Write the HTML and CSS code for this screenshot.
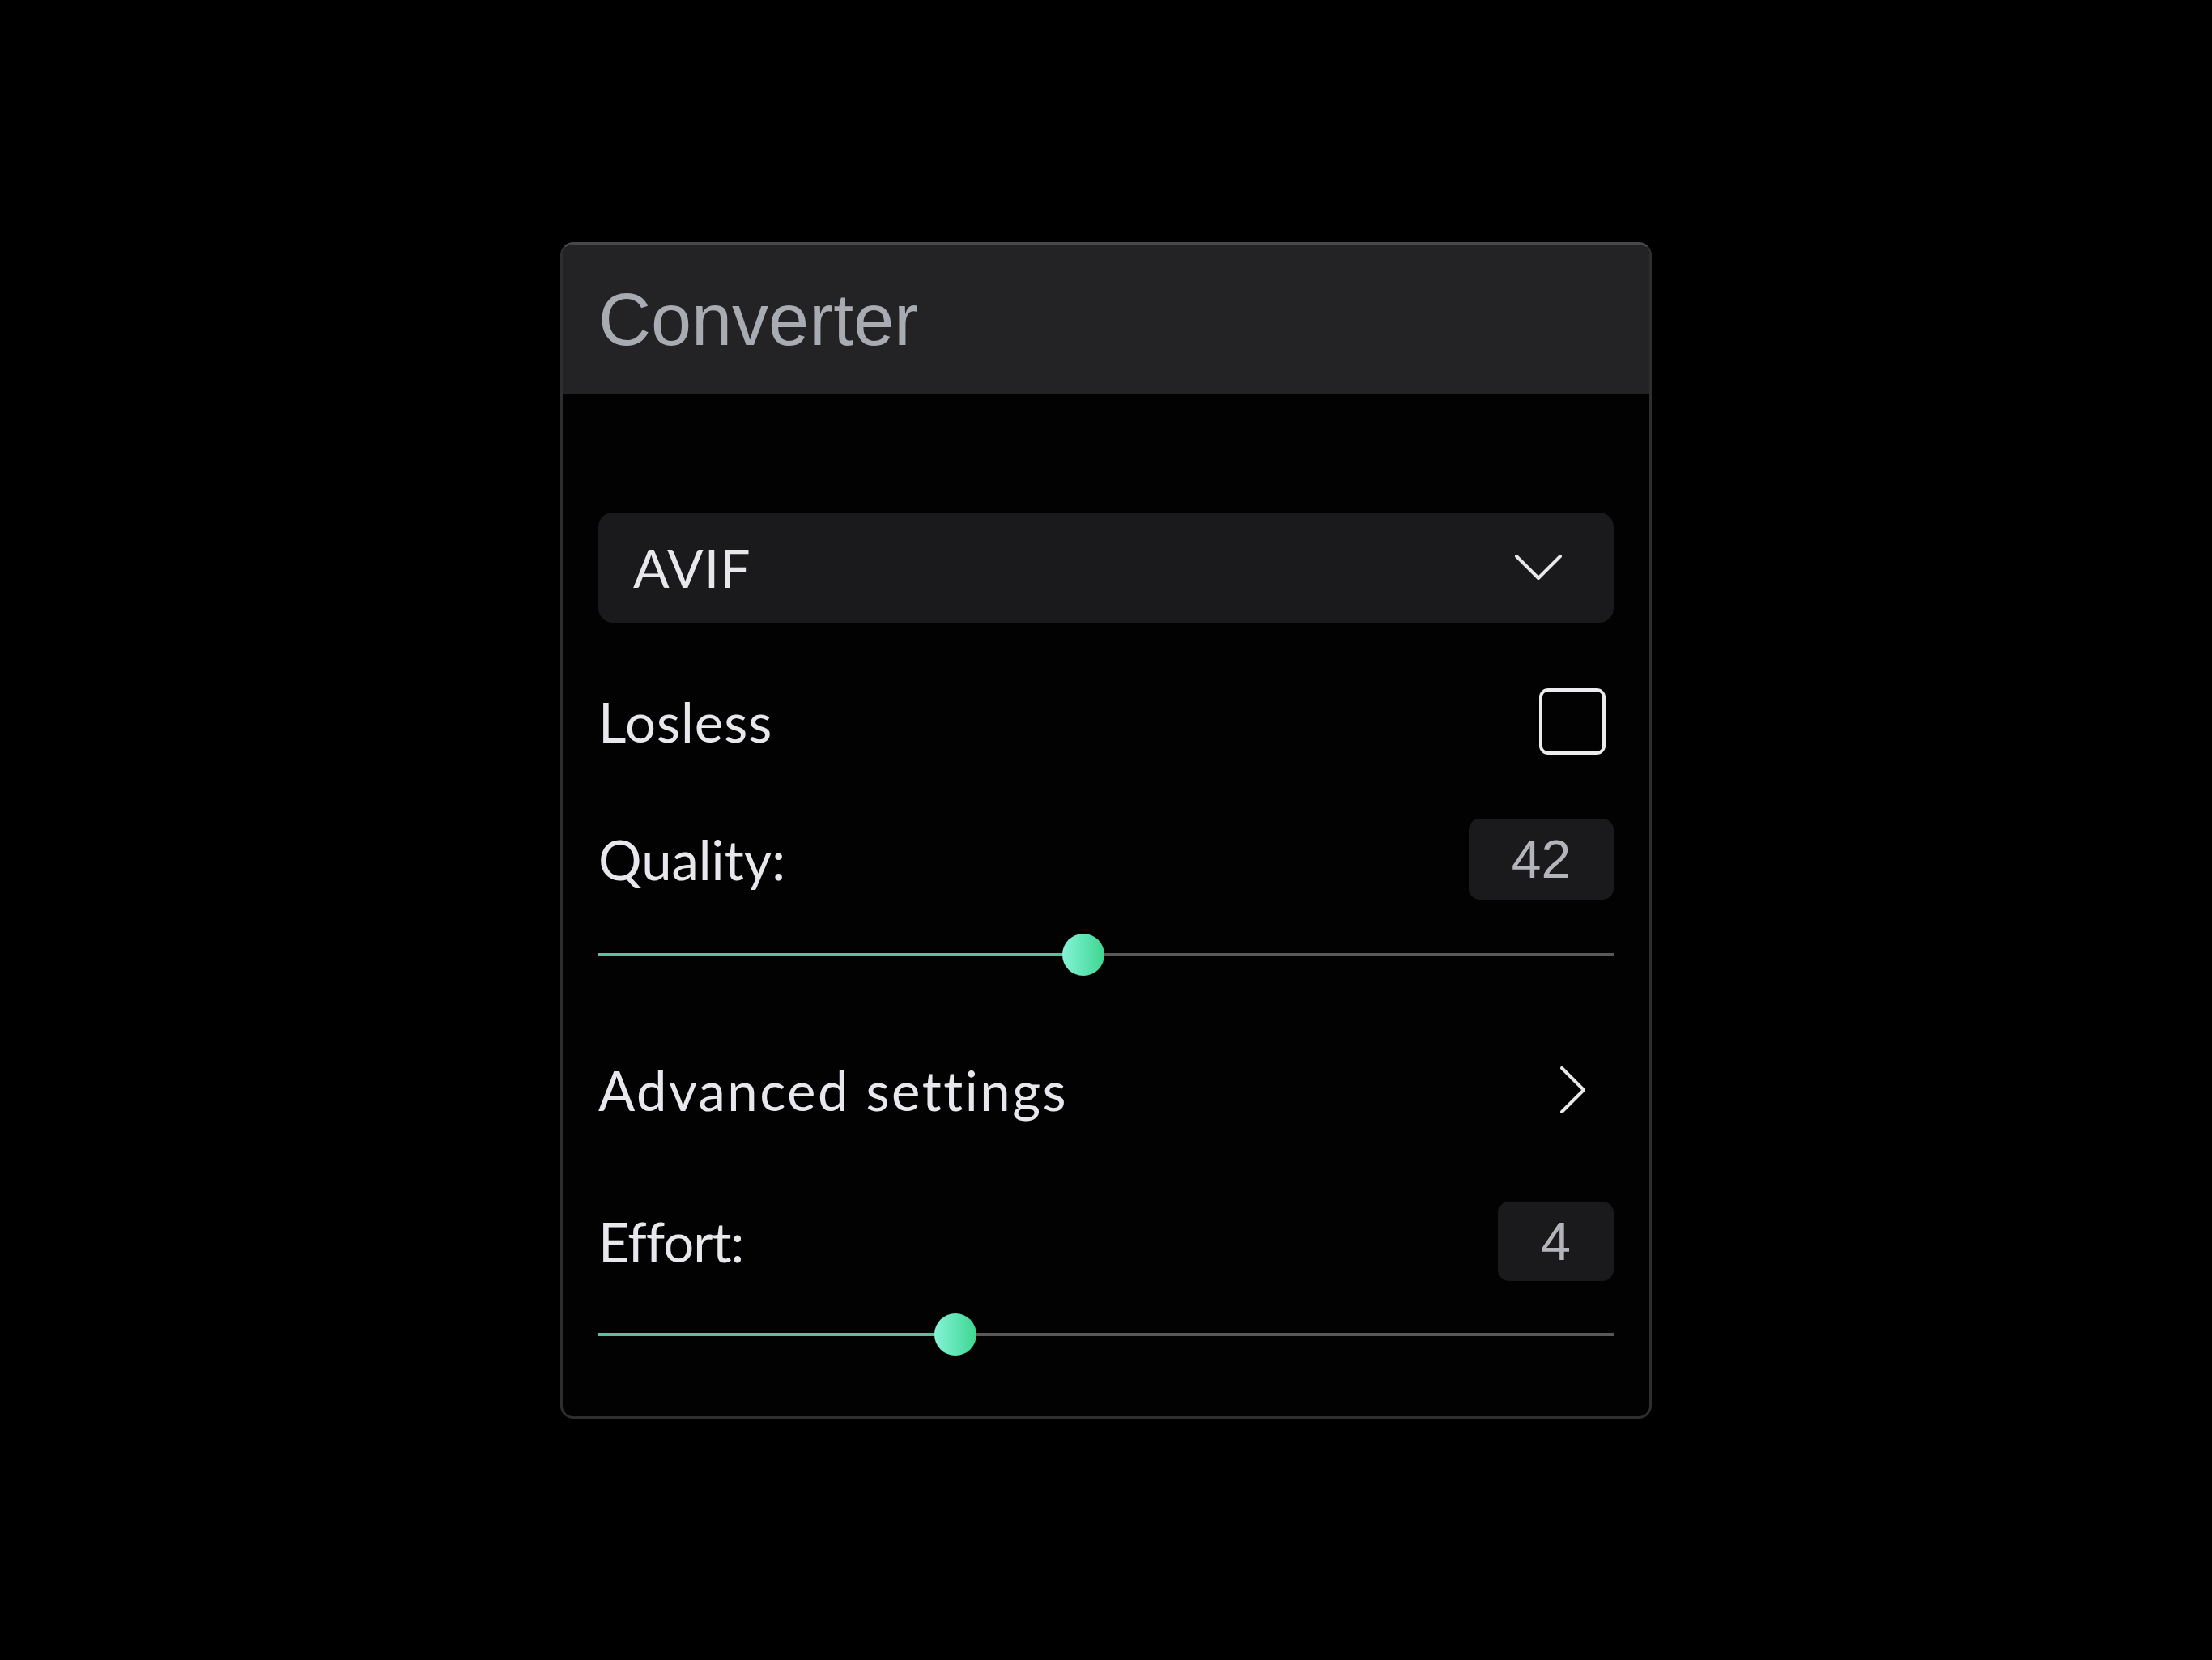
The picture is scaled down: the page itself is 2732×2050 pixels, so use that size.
FILE: index.html
```html
<!DOCTYPE html>
<html lang="en">
<head>
    <meta charset="UTF-8">
    <meta name="viewport" content="width=device-width, initial-scale=1.0">
    <title>Converter</title>
    <link rel="stylesheet" href="styles.css">
</head>
<body>
    <div class="card">
        <!-- Header -->
        <div class="card-header">
            <h1>Converter</h1>
        </div>

        <!-- Settings -->
        <div class="card-body">
            <div class="select">
                <span>AVIF</span>
                <svg class="chevron-down" viewBox="0 0 58 32" width="58" height="32">
                    <polyline points="2,2 29,29 56,2" fill="none" stroke="#e8e8ea" stroke-width="4" stroke-linecap="round" stroke-linejoin="round"/>
                </svg>
            </div>

            <div class="row row-check">
                <span class="label">Losless</span>
                <span class="checkbox"></span>
            </div>

            <div class="row row-value">
                <span class="label label-tight">Quality:</span>
                <span class="value value-wide">42</span>
            </div>
            <div class="slider slider-quality">
                <div class="slider-fill" style="width: 47.8%"></div>
                <div class="slider-thumb" style="left: 47.8%"></div>
            </div>

            <div class="row row-link">
                <span class="label label-wide">Advanced settings</span>
                <svg class="chevron-right" viewBox="0 0 32 58" width="32" height="58">
                    <polyline points="2,2 29,29 2,56" fill="none" stroke="#e8e8ea" stroke-width="4" stroke-linecap="round" stroke-linejoin="round"/>
                </svg>
            </div>

            <div class="row row-value row-effort">
                <span class="label label-narrow">Effort:</span>
                <span class="value">4</span>
            </div>
            <div class="slider slider-effort">
                <div class="slider-fill" style="width: 35.2%"></div>
                <div class="slider-thumb" style="left: 35.2%"></div>
            </div>
        </div>
    </div>
</body>
</html>
```

FILE: styles.css
```css
:root {
    --bg-color: #000000;
    --card-border: #2e2e30;
    --header-bg: #232325;
    --field-bg: #1a1a1c;
    --text-color: #e8e8ec;
    --muted-color: #a9abb3;
    --track-color: #59595b;
    --fill-color: #5fbf9c;
}

body {
    margin: 0;
    min-height: 100vh;
    background-color: var(--bg-color);
    display: flex;
    align-items: center;
    justify-content: center;
    font-family: Lato, "Noto Sans", sans-serif;
    color: var(--text-color);
}

.card {
    width: 1348px;
    box-sizing: border-box;
    border: 3px solid var(--card-border);
    border-top-color: #48484a;
    border-radius: 16px;
    overflow: hidden;
    background-color: #020203;
}

.card-header {
    height: 185px;
    background-color: var(--header-bg);
    display: flex;
    align-items: center;
    padding-left: 44px;
}

.card-header h1 {
    margin: 0;
    font-family: "Liberation Sans", Arial, sans-serif;
    font-weight: normal;
    font-size: 90px;
    color: var(--muted-color);
    line-height: 1;
    margin-top: 2px;
}

.card-body {
    padding: 146px 44px 75px 44px;
    display: flex;
    flex-direction: column;
}

.select {
    height: 136px;
    background-color: var(--field-bg);
    border-radius: 18px;
    display: flex;
    align-items: center;
    justify-content: space-between;
    padding: 0 64px 0 43px;
    font-size: 66px;
    letter-spacing: 1px;
}

.chevron-down {
    display: block;
}

.row {
    display: flex;
    align-items: center;
    justify-content: space-between;
}

.label {
    font-size: 67px;
    letter-spacing: 1px;
}

.label-wide {
    letter-spacing: 2.5px;
}

.label-tight {
    letter-spacing: 0;
}

.label-narrow {
    letter-spacing: -1px;
}

.row-check {
    height: 80px;
    margin-top: 82px;
}

.checkbox {
    width: 74px;
    height: 74px;
    border: 4px solid #ececee;
    border-radius: 11px;
    margin-right: 10px;
}

.row-value {
    height: 100px;
    margin-top: 80px;
}

.value {
    min-width: 143px;
    height: 100%;
    box-sizing: border-box;
    background-color: var(--field-bg);
    border-radius: 14px;
    display: flex;
    align-items: center;
    justify-content: center;
    font-family: "Liberation Sans", Arial, sans-serif;
    font-size: 66px;
    color: #b4b5bb;
}

.value-wide {
    min-width: 179px;
}

.slider {
    position: relative;
    height: 52px;
    margin-top: 42px;
}

.slider::before {
    content: "";
    position: absolute;
    left: 0;
    right: 0;
    top: 24px;
    height: 4px;
    background-color: var(--track-color);
}

.slider-fill {
    position: absolute;
    left: 0;
    top: 24px;
    height: 4px;
    background-color: var(--fill-color);
}

.slider-thumb {
    position: absolute;
    top: 0;
    width: 52px;
    height: 52px;
    margin-left: -26px;
    border-radius: 50%;
    background: linear-gradient(90deg, #86f3d6 0%, #5ee3b3 55%, #3fd68f 100%);
}

.row-link {
    height: 80px;
    margin-top: 101px;
}

.chevron-right {
    display: block;
    margin-right: 34px;
}

.row-effort {
    margin-top: 98px;
    height: 98px;
}

.slider-effort {
    margin-top: 40px;
}
```
